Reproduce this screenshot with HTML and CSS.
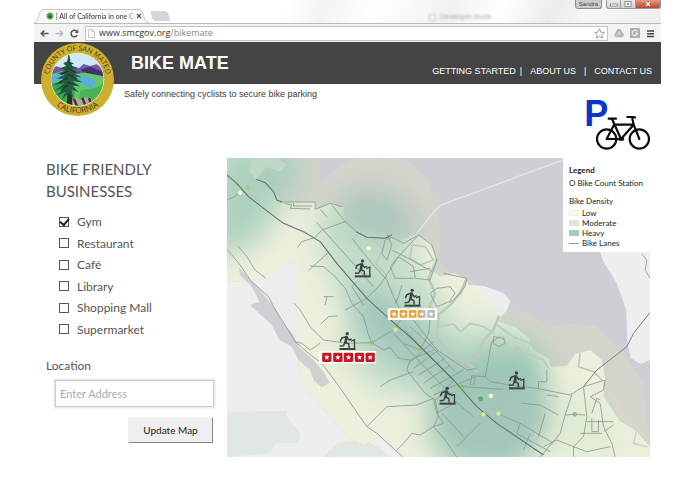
FILE: index.html
```html
<!DOCTYPE html>
<html lang="en">
<head>
<meta charset="utf-8">
<meta name="viewport" content="width=device-width, initial-scale=1">
<title>Bike Mate</title>
<link rel="stylesheet" href="styles.css">
</head>
<body>
<div class="window">
  <div class="tabstrip">
    <div class="tab">
      <svg class="tab-shape" viewBox="0 0 116 13" preserveAspectRatio="none" aria-hidden="true"><path d="M0 13C3 13 3 11 4 9L6 3Q7 .5 10 .5H104Q107 .5 108 3L111 10Q112 13 115 13" fill="#f9f9f9" stroke="#b4b4b4" stroke-width=".7"/></svg>
      <svg class="favicon" viewBox="0 0 8 8" aria-hidden="true"><circle cx="4" cy="4" r="3.7" fill="#b9b866"/><circle cx="4" cy="4" r="2.7" fill="#3b9a5d"/><path d="M4 1.4 5.6 6H2.6z" fill="#1d5b35"/><path d="M5.2 3 6.5 3.5 5.5 4.4z" fill="#58aee0"/></svg>
      <span class="tab-title">| All of California in one C</span>
      <button class="tab-close" type="button" aria-label="Close tab"><svg viewBox="0 0 6 6"><path d="M1 1 5 5M5 1 1 5" stroke="#555" stroke-width="1.1"/></svg></button>
    </div>
    <svg class="new-tab" viewBox="0 0 20 10" aria-hidden="true"><path d="M1 .5H15Q17 .5 18 3L19.5 9.5H5Q3.500 9.500 3 8z" fill="#d4d8dd" stroke="#c3c6ca" stroke-width=".6"/></svg>
    <span class="ghost"><i class="ghost-dot"></i>Developer mode</span>
    <div class="controls">
      <button class="user" type="button">Sandra</button>
      <button class="ctl first" type="button" aria-label="Minimize"><svg viewBox="0 0 8 6"><rect x=".6" y="3" width="6.800" height="2" fill="#fff" stroke="#666" stroke-width=".6"/></svg></button>
      <button class="ctl" type="button" aria-label="Maximize"><svg viewBox="0 0 8 6"><rect x="1" y=".5" width="6" height="5" fill="#fff" stroke="#666" stroke-width=".7"/><rect x="3" y="2.300" width="2" height="1.400" fill="#aaa" stroke="#666" stroke-width=".5"/></svg></button>
      <button class="ctl close" type="button" aria-label="Close"><svg viewBox="0 0 8 6"><path d="M2 1 6 5M6 1 2 5" stroke="#8a5048" stroke-width="2.400"/><path d="M2 1 6 5M6 1 2 5" stroke="#fff" stroke-width="1.400"/></svg></button>
    </div>
  </div>
  <div class="toolbar">
    <button class="tool" type="button" aria-label="Back"><svg viewBox="0 0 9 9"><path d="M8.500 4.500H1.500M4.300 1.500 1.300 4.500 4.300 7.500" fill="none" stroke="#555" stroke-width="1.600"/></svg></button>
    <button class="tool" type="button" aria-label="Forward"><svg viewBox="0 0 9 9"><path d="M.5 4.500H7.500M4.700 1.500 7.700 4.500 4.700 7.500" fill="none" stroke="#bbb" stroke-width="1.400"/></svg></button>
    <button class="tool" type="button" aria-label="Reload"><svg viewBox="0 0 9 9"><path d="M7.300 6A3.300 3.300 0 1 1 6.700 2.200" fill="none" stroke="#555" stroke-width="1.500"/><path d="M8.300.6V4.100H4.800z" fill="#555"/></svg></button>
    <div class="address">
      <svg class="page-icon" viewBox="0 0 7 9" aria-hidden="true"><path d="M.6.500H4.200L6.400 2.700V8.500H.6zM4.200.500V2.700H6.400" fill="#fff" stroke="#aaa" stroke-width=".7"/></svg>
      <span class="url">www.smcgov.org<span class="path">/bikemate</span></span>
      <svg class="star" viewBox="0 0 11 11" aria-label="Bookmark"><path d="M5.500.8 6.900 4.100 10.400 4.400 7.700 6.700 8.600 10.200 5.500 8.300 2.400 10.200 3.300 6.700.6 4.400 4.100 4.100z" fill="#fff" stroke="#888" stroke-width=".8"/></svg>
    </div>
    <svg class="ext" viewBox="0 0 10 10" aria-hidden="true"><path d="M3.500 1H6.500L10 7 8.500 9.300H1.600L.1 6.900z" fill="#b4b4b4"/><path d="M5 3.600 6.700 6.600H3.300z" fill="#e8e8e8"/><path d="M5 3.600 1.600 9.300" stroke="#ddd" stroke-width=".6"/></svg>
    <svg class="ext" viewBox="0 0 10 10" aria-hidden="true"><rect width="10" height="10" fill="#b0b0b0"/><path d="M7.200 3.500A2.700 2.700 0 1 0 7.500 5.700V5.100H5.300" fill="none" stroke="#eee" stroke-width="1.100"/></svg>
    <button class="tool" type="button" aria-label="Menu"><svg viewBox="0 0 9 9"><path d="M1 2H8M1 4.700H8M1 7.400H8" stroke="#444" stroke-width="1.500"/></svg></button>
  </div>

  <header class="masthead">
    <svg class="seal" viewBox="0 0 216 216" role="img" aria-label="County of San Mateo, California">
      <defs>
        <path id="arc-top" d="M22 108A86 86 0 0 1 194 108"/>
        <path id="arc-bottom" d="M8 108A100 100 0 0 0 208 108"/>
        <clipPath id="seal-in"><circle cx="108" cy="108" r="77"/></clipPath>
      </defs>
      <circle cx="108" cy="108" r="108" fill="#cdae2e"/>
      <circle cx="108" cy="108" r="79" fill="#f3efd0"/>
      <g clip-path="url(#seal-in)">
        <rect x="28" y="28" width="160" height="160" fill="#cfe9fa"/>
        <path d="M28 80 45 69 68 76 88 67 112 75 126 62 145 68 165 63 190 82V105H28z" fill="#7757a8"/>
        <path d="M118 78 145 70 190 88V98L160 93 130 98z" fill="#43336d"/>
        <path d="M28 94 62 83 94 94 128 87 190 100V190H28z" fill="#62c86a"/>
        <path d="M28 103 55 91 84 95 72 108 48 112 28 125zM91 106 130 99 150 103 164 119 155 125 147 140 137 126 118 121 102 115z" fill="#5aaedc"/>
        <path d="M28 120 59 116 78 129 102 134 94 190H28z" fill="#38a557"/>
        <path d="M117 140 158 133 192 117V190H107z" fill="#4ab259"/>
        <path d="M88 174 103 162 118 168 129 160 151 166 144 189H81z" fill="#b8a69a"/>
        <path d="M97 166 107 187M122 162 132 187M142 163 148 181" stroke="#3d382f" stroke-width="7"/>
        <path d="M80 37H84L93 188H77z" fill="#342c24"/>
        <path d="M81 34 88 52 82 54 98 61 86 65 110 75 90 77 117 89 94 88 120 101 94 99 122 116 93 113 116 129 92 125 112 146 88 136 96 162 82 148 61 167 73 144 46 156 70 132 41 141 70 119 36 124 70 106 46 105 71 94 49 90 72 82 56 75 74 68 66 60 78 54z" fill="#23593c"/>
        <path d="M81 53 91 69M78 73 102 88M77 92 107 105M76 115 104 126M80 83 58 94M78 103 53 117M79 125 59 141" stroke="#1c2f29" stroke-width="3"/>
      </g>
      <text class="seal-text"><textPath href="#arc-top" startOffset="50%" text-anchor="middle">COUNTY OF SAN MATEO</textPath></text>
      <text class="seal-text lower"><textPath href="#arc-bottom" startOffset="50%" text-anchor="middle">CALIFORNIA</textPath></text>
    </svg>
    <h1>BIKE MATE</h1>
    <nav class="nav">
      <a href="#start">GETTING STARTED</a><span class="bar tight">|</span><a href="#about">ABOUT US</a><span class="bar">|</span><a href="#contact">CONTACT US</a>
    </nav>
  </header>
  <div class="intro">
    <p class="tagline">Safely connecting cyclists to secure bike parking</p>
    <svg class="parking" viewBox="0 0 192 156" role="img" aria-label="Bike parking">
      <text x="-5" y="81" class="parking-p">P</text>
      <g fill="none" stroke="#0b0b0b" stroke-width="6.500" stroke-linecap="round" stroke-linejoin="round">
        <circle cx="62" cy="120" r="29"/><circle cx="160" cy="120" r="29"/>
        <path d="M62 120 84 77H143L105 120H62M78 60 105 120M143 77 160 120M143 77 138 54H124"/>
        <path d="M68 59H90M138 54 147 55"/>
        <path d="M101 120H110" stroke-width="10"/>
      </g>
    </svg>
  </div>

  <main class="content">
    <form class="filters">
      <h2>BIKE FRIENDLY BUSINESSES</h2>
      <ul class="choices">
        <li><label><input type="checkbox" checked><span>Gym</span></label></li>
        <li><label><input type="checkbox"><span>Restaurant</span></label></li>
        <li><label><input type="checkbox"><span>Café</span></label></li>
        <li><label><input type="checkbox"><span>Library</span></label></li>
        <li><label><input type="checkbox"><span>Shopping Mall</span></label></li>
        <li><label><input type="checkbox"><span>Supermarket</span></label></li>
      </ul>
      <label class="loc-label" for="address">Location</label>
      <input class="loc-input" id="address" type="text" placeholder="Enter Address">
      <button class="update" type="button">Update Map</button>
    </form>

    <section class="map-wrap">
      <svg class="map" viewBox="20 24 1270 897" preserveAspectRatio="xMidYMid slice" role="img" aria-label="Bike density map">
        <defs>
          <filter id="soft" x="-50%" y="-50%" width="200%" height="200%"><feGaussianBlur stdDeviation="42"/></filter>
          <filter id="faint" x="-50%" y="-50%" width="200%" height="200%"><feGaussianBlur stdDeviation="24"/></filter>
          <path id="land-shape" d="M20 24H100L85 62 105 88 135 98 165 130 180 156H285L290 178 330 160 370 172 375 215 408 245 440 252 470 242 500 250 540 270 590 252 632 280 650 325 640 365 660 380 700 370 738 385 745 405 790 408 850 430 870 452 860 480 832 512 890 535 925 565 940 600 985 625 990 650 1040 648 1065 612 1110 600 1145 630 1155 690 1150 740 1190 800 1240 835 1290 890V921H20z"/>
          <clipPath id="land"><use href="#land-shape"/></clipPath>
          <path id="reach-shape" d="M20 24H295L300 105 325 75 370 40 400 24H545L590 55 625 95 650 155 660 230 655 330 690 365 745 385 800 440 860 480 930 488 985 530 1050 522 1130 528 1165 570 1205 605 1240 655 1272 700 1282 830 1290 850V921H560L480 860 430 885 380 860 320 790 265 730 235 660 236 500 222 335 130 388 20 397z"/>
          <clipPath id="reach"><use href="#reach-shape"/></clipPath>
          <symbol id="gym" viewBox="0 0 54 54" overflow="visible">
            <g fill="none" stroke="#3c4142" stroke-linecap="round" stroke-linejoin="round">
              <path d="M2 51H50" stroke-width="6" stroke-linecap="butt"/>
              <path d="M47 48V23L38 27" stroke-width="4"/>
              <path d="M23 15 20 31" stroke-width="8"/>
              <path d="M21 14 9 18 5 27M25 16 31 24 37 22M21 31 30 36 31 46M19 31 14 41 4 42" stroke-width="4.500"/>
            </g>
            <circle cx="25" cy="5" r="5" fill="#3c4142"/>
          </symbol>
          <path id="pt" d="M0-8 2-3 8-2.500 3.500 1.500 5 7 0 4-5 7-3.500 1.500-8-2.500-2-3z" fill="#fff"/>
        </defs>
        <rect x="20" y="24" width="1270" height="897" fill="#cfced5"/>
        <use href="#land-shape" fill="#eeeeef"/>
        <path d="M1138 300 1150 335 1190 400 1218 480 1222 580 1232 625 1262 642 1290 630V300z" fill="#eeeeef"/>
        <path d="M20 785H80L200 783V800L240 850 235 880H165L150 910 20 921zM310 921 350 880 430 868 480 895 510 921z" fill="#e1e7e1"/>
        <use href="#reach-shape" fill="#d5d4cc"/>
        <g clip-path="url(#land)"><use href="#reach-shape" fill="#edf0dc"/></g>
        <path d="M135 385 215 332 238 420 235 570 180 550 120 440z" fill="#ececee"/>
        <path d="M745 405 790 408 850 430 870 452 860 480 838 505 800 450z" fill="#eeeeef"/>
        <g clip-path="url(#reach)">
          <g filter="url(#soft)">
            <path d="M-20-20H200L250 60 235 120 175 165 140 250 60 300-40 320z" fill="#a6cdbb" opacity=".9"/>
            <path d="M340 150 440 110 550 150 600 240 510 300 380 250z" fill="#a3c3b6" opacity=".85"/>
            <path d="M270 180 380 195 560 290 640 420 720 540 860 520 960 600 990 700 760 740 650 710 500 740 370 620 380 480 320 350z" fill="#b2d6c2" opacity=".75"/>
            <path d="M380 390 520 450 680 600 640 690 500 620 420 540z" fill="#94beb4" opacity=".75"/>
            <path d="M630 650 780 600 950 580 985 700 990 820 900 960H700L620 850z" fill="#98c3b4" opacity=".9"/>
            <path d="M980 740 1140 720 1230 921H960z" fill="#d8ead0" opacity=".6"/>
          </g>
          <ellipse cx="830" cy="800" rx="140" ry="105" fill="#a5c4be" opacity=".5" filter="url(#faint)"/>
          <path d="M85 62 100 24H170L200 45 180 65 140 50 108 88z" fill="#c4dcc7" opacity=".7"/>
        </g>
        <path d="M55 350 85 385 120 420 160 470 190 520 220 555 235 590 280 630 312 668 328 698 305 712 280 690 270 660 235 630 215 590 178 570 155 525 128 500 90 465 118 455 95 410 60 375z" fill="#c9cacf" opacity=".85"/>
        <!-- sloughs and lagoons -->
        <g fill="none" stroke="#bccabd" stroke-linejoin="round" stroke-linecap="round">
          <path d="M650 330 625 385 645 430 628 470 655 495 650 560 680 600 745 640 770 665M738 390 720 430 690 465 660 490M835 500 820 540 790 570 775 620 735 635" stroke-width="8"/>
          <path d="M830 525 880 560 930 580 920 610 970 630 985 655M660 530 700 522 720 545 750 520 790 530 820 550M850 560 870 610 890 590 920 620M1080 610 1075 650 1120 665 1145 690M465 275 490 300 465 340 495 370 500 400 520 430M575 285 615 290 640 330 600 345 570 325z" stroke-width="5"/>
          <path d="M1150 700 1170 760 1200 810 1250 840 1240 880 1280 890" stroke-width="5" stroke="#ccd5c9"/>
        </g>
        <path d="M590 250 645 180 662 165 1025 31" fill="none" stroke="#e4e4e9" stroke-width="4"/>
        <!-- shoreline and local streets -->
        <g fill="none" stroke="#8b948e" stroke-width="2.400" stroke-linejoin="round">
          <path d="M180 156H285V178L330 160 365 170M195 160 215 165 210 175 270 177M220 158V168H275M300 178 320 200M335 165 375 215 408 245"/>
          <path d="M20 150 40 142 60 128M20 297 60 345 90 390 145 440 160 470 185 510 225 575 265 610 305 640 350 700 440 830 470 850 548 921"/>
          <path d="M53 288 80 320 105 360 136 384M232 293 245 275 285 262 305 240 375 215M290 218 390 330 460 410M265 362 300 330 328 305M270 348 310 350 345 380 375 415 395 460 430 500 445 555 455 578"/>
          <path d="M222 460 240 480 270 530 310 570 380 580 455 578 520 540 570 470M310 440H340M315 465 320 440M302 522 325 500 352 498"/>
          <path d="M225 575 245 580 270 600 300 580M455 578 490 600 510 592 535 625 570 630 640 600M570 630 560 660 615 730 645 750 665 735 700 690M480 710 510 690 580 665M440 830 500 770 590 765 640 745 650 790 670 820 640 830 600 855 575 850 550 880 530 900"/>
          <path d="M395 265 455 340 500 390 520 440 545 490M375 480 440 445 480 405 535 320 595 255M430 465 395 410 410 395M500 250 515 285 500 330 485 310 495 270 515 262 550 280 595 255 635 285 650 330 630 390 585 385 580 350 535 320 510 350 525 385 580 385M515 300 575 330 635 365M545 405 535 440 525 460M570 365 630 355M670 370 740 385 735 410 700 450 650 470 630 430 650 415 690 410 705 430 690 450"/>
          <path d="M520 550 640 680 700 740M555 540 610 600 700 690M570 530 640 595 705 665M580 510 650 600 740 660 770 655M550 580 600 600 625 550 630 505M565 640 640 575M580 655 655 600M595 675 675 625M610 700 690 645M630 715 730 660M640 735 765 680 760 705"/>
          <path d="M795 680 755 677 750 705M730 710 850 718M840 560 815 575 795 680 810 695 870 705 950 715 1050 735 1090 710M820 560 850 565 855 580 835 590 820 580zM980 660V695H955V715M980 735 1015 740"/>
          <path d="M905 760 960 765 1015 795M835 792 900 820 1000 880M975 790 955 860M900 820 890 850 990 905M1055 735 1035 795 1020 850 960 921M1035 795 1065 793 1095 795M1090 710 1100 800 1090 860 1060 890M1090 710 1155 690 1150 720 1110 740M1110 740 1140 760 1150 830 1175 880 1185 921M1115 790 1130 745 1140 750M1100 815H1180M1115 805V845H1135V810M1080 850H1145M970 890 1010 870 1060 890 1100 905 1170 890M1060 890V921M1150 845 1180 825"/>
          <path d="M645 750 655 800 640 830 675 870 710 921M665 790 730 860M700 750 760 800M650 790 710 755M930 850 910 900M780 820 710 890"/>
          <path d="M1265 312 1280 330 1275 360 1290 385"/>
        </g>
        <g fill="none" stroke="#66706b" stroke-width="3.200" stroke-linejoin="round">
          <path d="M20 75 50 100 85 140 150 190 190 220 250 245 300 275 350 340 440 445 500 500 580 570 700 690 770 770 830 820 970 915"/>
          <path d="M108 88 135 98 160 125 170 150 185 156M408 245 440 262 495 265 515 255"/>
        </g>
        <path d="M1090 710 1130 660 1220 590 1240 550 1290 487" fill="none" stroke="#7c817e" stroke-width="3"/>
        <!-- count stations -->
        <g>
          <g fill="#fbf9cf"><circle cx="60" cy="128" r="6.500"/><circle cx="446" cy="295" r="6.500"/><circle cx="812" cy="738" r="6.500"/></g>
          <g fill="#d9ea92"><circle cx="526" cy="539" r="6.500"/><circle cx="790" cy="793" r="6.500"/><circle cx="835" cy="791" r="6.500"/></g>
          <g fill="#a5d07d"><circle cx="83" cy="113" r="6.500"/><circle cx="593" cy="605" r="6.500"/></g>
          <g fill="#82c874"><circle cx="455" cy="578" r="6.500"/><circle cx="727" cy="710" r="6.500"/><circle cx="1064" cy="793" r="7"/></g>
          <circle cx="781" cy="746" r="7.500" fill="#55b065"/>
        </g>
        <use href="#gym" x="402" y="328" width="54" height="54"/>
        <use href="#gym" x="551" y="416" width="54" height="54"/>
        <use href="#gym" x="356" y="546" width="54" height="54"/>
        <use href="#gym" x="656" y="710" width="54" height="54"/>
        <use href="#gym" x="864" y="664" width="54" height="54"/>
        <g>
          <rect x="503" y="475" width="148" height="35" fill="#fffef8"/>
          <g fill="#e9a23b"><rect x="510" y="480" width="23" height="23" rx="3"/><rect x="538" y="480" width="23" height="23" rx="3"/><rect x="566" y="480" width="23" height="23" rx="3"/><rect x="593" y="480" width="14" height="23" rx="3"/></g>
          <g fill="#b9b9c0"><rect x="605" y="480" width="11" height="23" rx="2"/><rect x="621" y="480" width="23" height="23" rx="3"/></g>
          <use href="#pt" x="521.500" y="492"/><use href="#pt" x="549.500" y="492"/><use href="#pt" x="577.500" y="492"/><use href="#pt" x="604.500" y="492"/><use href="#pt" x="632.500" y="492"/>
        </g>
        <g>
          <rect x="297" y="603" width="171" height="37" fill="#fff"/>
          <g fill="#c8151f"><rect x="306" y="608" width="28" height="28" rx="4"/><rect x="339" y="608" width="28" height="28" rx="4"/><rect x="371" y="608" width="28" height="28" rx="4"/><rect x="404" y="608" width="28" height="28" rx="4"/><rect x="436" y="608" width="28" height="28" rx="4"/></g>
          <use href="#pt" x="320" y="622"/><use href="#pt" x="353" y="622"/><use href="#pt" x="385" y="622"/><use href="#pt" x="418" y="622"/><use href="#pt" x="450" y="622"/>
        </g>
      </svg>
      <aside class="legend">
        <h3>Legend</h3>
        <p class="station">O Bike Count Station</p>
        <p>Bike Density</p>
        <ul>
          <li><i class="swatch low"></i>Low</li>
          <li><i class="swatch moderate"></i>Moderate</li>
          <li><i class="swatch heavy"></i>Heavy</li>
          <li><i class="swatch lane"></i>Bike Lanes</li>
        </ul>
      </aside>
    </section>
  </main>
</div>
</body>
</html>
```
FILE: styles.css
```css
* { box-sizing: border-box; }
body { margin: 0; background: #fff; color: #555; font-family: "Liberation Sans", sans-serif; }
h1, h2, h3, p, ul { margin: 0; padding: 0; font-weight: 400; }
ul { list-style: none; }
button { margin: 0; padding: 0; border: 0; background: none; font: inherit; }
svg { display: block; }
.window { margin: 0 34px; }

.tabstrip {
  position: relative;
  display: flex;
  align-items: flex-end;
  height: 23px;
  background: linear-gradient(115deg, #fff 40%, #f3f3f3 46%, #fff 54%, #f1f1f1 66%, #fff 74%, #ececec 82%, #f6f6f6 88%, #eee);
}
.tab { position: relative; display: flex; align-items: center; width: 116px; height: 14px; padding: 0 9px 0 12px; gap: 2px; }
.tab-shape { position: absolute; inset: 0; width: 100%; height: 100%; }
.favicon { position: relative; flex: none; width: 8px; height: 8px; }
.tab-title {
  position: relative;
  flex: 1;
  color: #333;
  font: 7px/12px Lato, sans-serif;
  white-space: nowrap;
  mask-image: linear-gradient(90deg, #000 85%, #0006);
}
.tab-close { position: relative; }
.tab-close svg { width: 6px; height: 6px; }
.new-tab { width: 20px; height: 10px; margin-bottom: 2px; }
.ghost { position: absolute; left: 63%; bottom: 1px; display: flex; align-items: center; gap: 4px; color: #aaa; font-size: 7px; line-height: 10px; white-space: nowrap; filter: blur(1px); }
.ghost-dot { width: 7px; height: 7px; border: 1px solid #ccc; }
.controls { position: absolute; top: 0; right: 0; display: flex; height: 9px; }
.user { width: 27px; margin-right: 4px; border: 1px solid #8d8d8d; border-top: 0; border-radius: 0 0 3px 3px; background: #ccc; color: #444; font-size: 6px; line-height: 7px; }
.ctl { display: grid; place-items: center; width: 15px; border: 1px solid #999; border-top: 0; border-left: 0; background: linear-gradient(#e9e9ec, #cdd0d6); }
.ctl.first { border-left: 1px solid #999; border-radius: 0 0 0 3px; }
.ctl.close { width: 25px; border-radius: 0 0 3px 0; background: linear-gradient(#e59a89, #c9402d); }
.ctl svg { width: 8px; height: 6px; }

.toolbar { display: flex; align-items: center; gap: 6px; height: 19px; padding: 0 6px; border-top: 1px solid #bbb; background: #f3f3f3; }
.tool svg { width: 9px; height: 9px; }
.address { display: flex; align-items: center; flex: 1; gap: 4px; height: 15px; padding: 0 2px; border: 1px solid #c4c4c4; background: #fff; }
.page-icon { width: 7px; height: 9px; }
.url { flex: 1; color: #333; font: 9px/12px "Open Sans", sans-serif; }
.path { color: #888; }
.star { width: 11px; height: 11px; }
.ext { width: 10px; height: 10px; }

.masthead { position: relative; display: flex; justify-content: space-between; height: 42px; padding: 0 9px 0 97px; background: #444; color: #fff; }
.seal { position: absolute; top: 1px; left: 7px; width: 73px; height: 73px; }
.seal-text { font: 21px "Open Sans", sans-serif; fill: #3f3c20; }
.seal-text.lower { font-size: 24px; }
.masthead h1 { font-weight: 700; font-size: 18px; line-height: 42px; }
.nav { display: flex; align-self: flex-end; padding-bottom: 6px; font-size: 9px; line-height: 14px; white-space: nowrap; }
.nav a { color: #fff; text-decoration: none; }
.bar { margin: 0 8px; }
.bar.tight { margin: 0 8px 0 4px; }

.intro { display: flex; justify-content: space-between; padding: 4px 11px 0 90px; }
.tagline { color: #3c3c3c; font-size: 9px; line-height: 12px; }
.parking { width: 64px; height: 52px; margin-top: 11px; overflow: visible; }
.parking-p { font: 700 108px "Liberation Sans", sans-serif; fill: #0a35cd; }

.content { display: grid; grid-template-columns: 168px minmax(0, 1fr); gap: 13px; padding: 7px 11px 37px 12px; }
.filters { display: flex; flex-direction: column; font-family: Lato, sans-serif; }
.filters h2 { color: #555; font: 15px/22px Lato, sans-serif; }
.choices { display: grid; grid-auto-rows: 1fr; height: 129px; margin-top: 12px; padding-left: 13px; font-size: 12px; }
.choices label { display: flex; align-items: center; gap: 8px; }
.choices input { appearance: none; display: grid; place-items: center; width: 10px; height: 10px; margin: 0; border: 1px solid #555; background: #fff; }
.choices input:checked::before { content: ""; width: 7px; height: 4px; margin-bottom: 2px; border: solid #222; border-width: 0 0 2px 2px; transform: rotate(-50deg); }
.loc-label { margin-top: 13px; font-size: 12px; line-height: 20px; }
.loc-input { width: 159px; height: 27px; margin: 4px 0 0 9px; padding: 0 4px; border: 1px solid #ccc; background: #fff; box-shadow: 0 0 2px 1px #ddd; color: #555; font: 11px Lato, sans-serif; }
.loc-input::placeholder { color: #aaa; opacity: 1; }
.update { align-self: flex-end; width: 85px; height: 26px; margin: 10px 1px 0 0; border: 1px solid #eee; border-right-color: #888; border-bottom-color: #888; background: #efefef; color: #222; font: 10px Lato, sans-serif; }

.map-wrap { position: relative; }
.map { width: 100%; height: auto; aspect-ratio: 423 / 299; }
.legend { position: absolute; top: 0; right: -11px; width: 98px; height: 94px; padding: 7px 0 0 6px; background: #fff; color: #222; font: 8px/10px Lato, sans-serif; white-space: nowrap; }
.legend h3 { font-weight: 700; font-size: 8px; line-height: 10px; }
.legend .station { margin: 3px 0 8px; }
.legend ul { margin-top: 2px; }
.legend li { display: flex; align-items: center; gap: 3px; }
.swatch { width: 10px; height: 6px; }
.low { background: #fbfbe6; border: 1px solid #efefdf; }
.moderate { background: #d3eadb; }
.heavy { background: #a5cbbb; }
.lane { height: 1px; background: #999; }
```
